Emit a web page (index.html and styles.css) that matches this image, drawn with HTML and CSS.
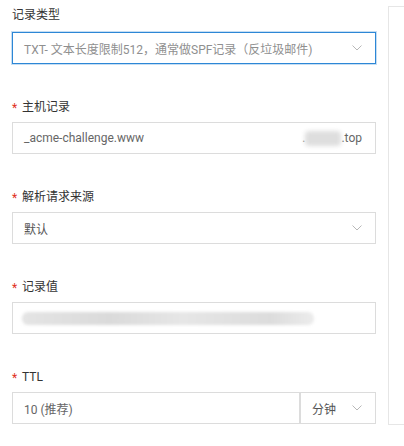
FILE: index.html
```html
<!DOCTYPE html>
<html lang="zh-CN">
<head>
<meta charset="utf-8">
<link rel="stylesheet" href="styles.css">
</head>
<body>
<div class="page">
  <form class="form">
    <div class="field field-first">
      <div class="label">记录类型</div>
      <div class="box box-focus">
        <span class="value value-light">TXT- 文本长度限制512，通常做SPF记录（反垃圾邮件)</span>
        <svg class="chev" width="10" height="6" viewBox="0 0 10 6"><polyline points="0.5,0.5 5,5 9.5,0.5" fill="none" stroke="#b8b8b8" stroke-width="1"/></svg>
      </div>
    </div>

    <div class="field">
      <div class="label"><span class="req">*</span>主机记录</div>
      <div class="box">
        <span class="value">_acme-challenge.www</span>
        <span class="suffix"><span class="dot">.</span><span class="blur-sm"></span>.top</span>
      </div>
    </div>

    <div class="field">
      <div class="label"><span class="req">*</span>解析请求来源</div>
      <div class="box">
        <span class="value value-dark">默认</span>
        <svg class="chev" width="10" height="6" viewBox="0 0 10 6"><polyline points="0.5,0.5 5,5 9.5,0.5" fill="none" stroke="#b8b8b8" stroke-width="1"/></svg>
      </div>
    </div>

    <div class="field">
      <div class="label"><span class="req">*</span>记录值</div>
      <div class="box">
        <span class="blur-lg"></span>
      </div>
    </div>

    <div class="field">
      <div class="label"><span class="req">*</span>TTL</div>
      <div class="split">
        <div class="box box-main">
          <span class="value">10 (推荐)</span>
        </div>
        <div class="box box-unit">
          <span class="value value-dark">分钟</span>
          <svg class="chev" width="10" height="6" viewBox="0 0 10 6"><polyline points="0.5,0.5 5,5 9.5,0.5" fill="none" stroke="#b8b8b8" stroke-width="1"/></svg>
        </div>
      </div>
    </div>
  </form>
  <aside class="side"></aside>
</div>
</body>
</html>
```

FILE: styles.css
```css
html, body {
  margin: 0;
  padding: 0;
  background: #fff;
}

body {
  font-family: Roboto, "Noto Sans CJK SC", sans-serif;
  font-size: 12px;
  color: #333;
}

.page {
  display: flex;
  align-items: flex-start;
  width: 404px;
  height: 446px;
  overflow: hidden;
}

.form {
  width: 364px;
  padding: 5px 0 0 12px;
  margin: 0;
  flex-shrink: 0;
}

.field {
  margin-bottom: 33px;
}

.label {
  height: 20px;
  line-height: 20px;
  font-size: 12px;
  color: #333;
  margin-bottom: 5px;
  display: flex;
  align-items: center;
}

.field-first .label {
  margin-bottom: 7px;
}

.req {
  color: #e0301e;
  font-size: 12px;
  width: 6px;
  margin-right: 4px;
  line-height: 12px;
  position: relative;
  top: 1px;
}

.box {
  box-sizing: border-box;
  height: 32px;
  border: 1px solid #dcdcdc;
  padding: 0 13px 0 11px;
  display: flex;
  align-items: center;
  justify-content: space-between;
  background: #fff;
}

.box-focus {
  border-color: #2d87d6;
  box-shadow: 0 0 0 1px #c6def3;
}

.value {
  color: #666;
  white-space: nowrap;
}

.value-light {
  color: #8f8f8f;
}

.value-dark {
  color: #555;
}

.chev {
  display: block;
  flex-shrink: 0;
}

.suffix {
  display: flex;
  align-items: center;
  color: #666;
}

.dot {
  color: #888;
}

.blur-sm {
  display: inline-block;
  width: 36px;
  height: 15px;
  background: #dedede;
  filter: blur(2px);
  border-radius: 4px;
}

.blur-lg {
  display: block;
  width: 292px;
  height: 13px;
  margin-left: -2px;
  background: linear-gradient(90deg, #e4e4e4 0%, #dadada 30%, #e6e6e6 55%, #dcdcdc 85%, #ececec 100%);
  filter: blur(1.5px);
  border-radius: 6px;
}

.split {
  display: flex;
}

.box-main {
  width: 288px;
}

.box-unit {
  flex: 1;
  padding-left: 11px;
}

.side {
  flex: 1;
  margin-left: 12px;
  margin-top: 6px;
  height: 419px;
  border: 1px solid #e6e6e6;
  border-right: none;
  box-sizing: border-box;
}
```
